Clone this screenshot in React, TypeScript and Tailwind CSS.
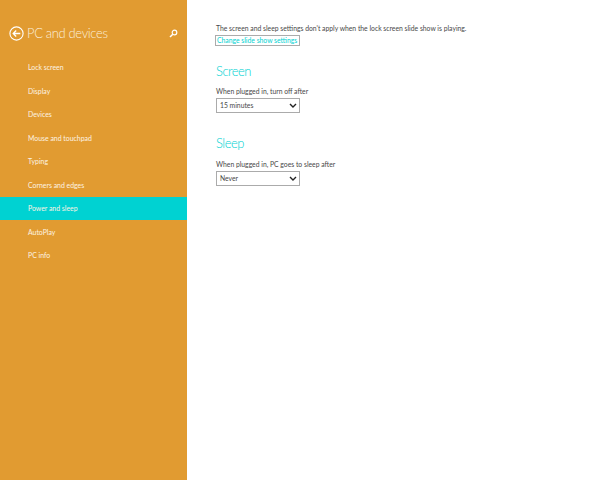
const items = ["Lock screen","Display","Devices","Mouse and touchpad","Typing","Corners and edges","Power and sleep","AutoPlay","PC info"];

export default function App() {
  return (
    <div className="flex w-[600px] h-[480px] overflow-hidden bg-white font-['Lato',sans-serif]">
      <aside className="w-[187px] h-full shrink-0 bg-[#e19b31] text-white">
        <div className="flex items-center h-[20px] mt-[23px] pl-[9px] pr-[9px]">
          <svg width="15" height="15" viewBox="0 0 15 15" fill="none" stroke="#fff" className="shrink-0">
            <circle cx="7.5" cy="7.5" r="6.6" strokeWidth="1.1" />
            <path d="M11.3 7.5H4.4M7.2 4.5L4.2 7.5L7.2 10.5" strokeWidth="1.3" />
          </svg>
          <span className="ml-[3px] text-[13px] font-light leading-none tracking-[-0.35px] text-[#fbeedb]">PC and devices</span>
          <svg width="9" height="9" viewBox="0 0 9 9" fill="none" stroke="#fff" className="ml-auto">
            <circle cx="5.5" cy="3.5" r="2.3" strokeWidth="1.2" />
            <path d="M3.8 5.2L1 8" strokeWidth="1.5" />
          </svg>
        </div>
        <nav className="mt-[12.5px]">
          {items.map((t) => (
            <div key={t} className={`h-[23.5px] flex items-center pl-[28px] text-[6.9px] text-[#fdf3e3] ${t === "Power and sleep" ? "bg-[#00d2d2]" : ""}`}>{t}</div>
          ))}
        </nav>
      </aside>
      <main className="flex-1 pl-[29px] pt-[23px] text-[#484848] text-[6.8px] leading-[11px]">
        <p>The screen and sleep settings don't apply when the lock screen slide show is playing.</p>
        <div className="mt-[1px] -ml-[1px] w-[85px] h-[11px] flex items-center border border-[#ababab] pl-[1px] text-[#00d2d2] whitespace-nowrap">Change slide show settings</div>
        <h2 className="mt-[17px] text-[13px] font-light leading-[17px] tracking-[-0.5px] text-[#00d2d2]">Screen</h2>
        <p className="mt-[6px]">When plugged in, turn off after</p>
        <Select value="15 minutes" />
        <h2 className="mt-[22px] text-[13px] font-light leading-[17px] tracking-[-0.5px] text-[#00d2d2]">Sleep</h2>
        <p className="mt-[7px]">When plugged in, PC goes to sleep after</p>
        <Select value="Never" />
      </main>
    </div>
  );
}

function Select({ value }: { value: string }) {
  return (
    <div className="mt-[1px] w-[84px] h-[15px] flex items-center justify-between border-[1.5px] border-[#ababab] pl-[3px] pr-[2px]">
      <span>{value}</span>
      <svg width="8" height="6" viewBox="0 0 8 6" fill="none" stroke="#222" strokeWidth="1.4"><path d="M1 1L4 4L7 1" /></svg>
    </div>
  );
}
